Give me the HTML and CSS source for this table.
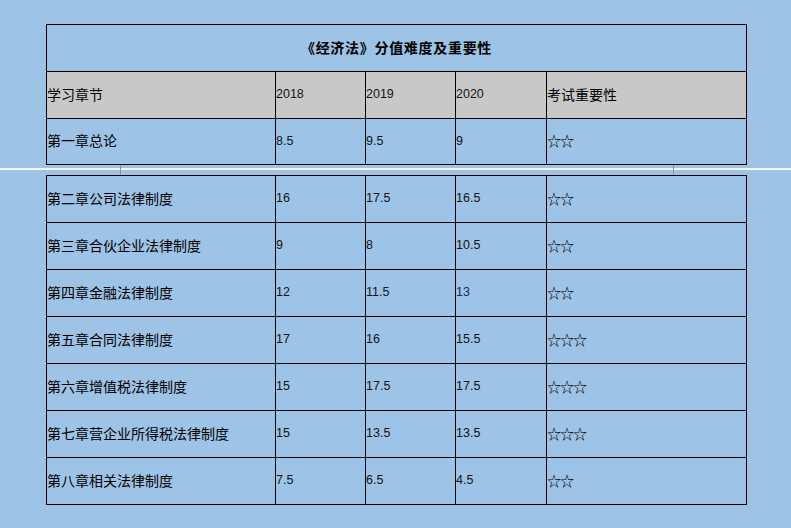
FILE: index.html
```html
<!DOCTYPE html>
<html lang="zh-CN">
<head>
<meta charset="utf-8">
<title>《经济法》分值难度及重要性</title>
<link rel="stylesheet" href="styles.css">
</head>
<body>
<div class="page">
  <div class="grid top">
    <div class="cell title">《经济法》分值难度及重要性</div>
    <div class="cell head zh">学习章节</div>
    <div class="cell head num">2018</div>
    <div class="cell head num">2019</div>
    <div class="cell head num">2020</div>
    <div class="cell head zh">考试重要性</div>
    <div class="cell zh">第一章总论</div>
    <div class="cell num">8.5</div>
    <div class="cell num">9.5</div>
    <div class="cell num">9</div>
    <div class="cell star">☆☆</div>
  </div>
  <div class="split">
    <span class="tick tick-left"></span>
    <span class="tick tick-right"></span>
  </div>
  <div class="grid bottom">
    <div class="cell zh">第二章公司法律制度</div>
    <div class="cell num">16</div>
    <div class="cell num">17.5</div>
    <div class="cell num">16.5</div>
    <div class="cell star">☆☆</div>

    <div class="cell zh">第三章合伙企业法律制度</div>
    <div class="cell num">9</div>
    <div class="cell num">8</div>
    <div class="cell num">10.5</div>
    <div class="cell star">☆☆</div>

    <div class="cell zh">第四章金融法律制度</div>
    <div class="cell num">12</div>
    <div class="cell num">11.5</div>
    <div class="cell num blue">13</div>
    <div class="cell star">☆☆</div>

    <div class="cell zh">第五章合同法律制度</div>
    <div class="cell num">17</div>
    <div class="cell num">16</div>
    <div class="cell num">15.5</div>
    <div class="cell star">☆☆☆</div>

    <div class="cell zh">第六章增值税法律制度</div>
    <div class="cell num">15</div>
    <div class="cell num">17.5</div>
    <div class="cell num">17.5</div>
    <div class="cell star">☆☆☆</div>

    <div class="cell zh">第七章营企业所得税法律制度</div>
    <div class="cell num">15</div>
    <div class="cell num">13.5</div>
    <div class="cell num">13.5</div>
    <div class="cell star">☆☆☆</div>

    <div class="cell zh">第八章相关法律制度</div>
    <div class="cell num">7.5</div>
    <div class="cell num">6.5</div>
    <div class="cell num">4.5</div>
    <div class="cell star">☆☆</div>
  </div>
</div>
</body>
</html>
```
FILE: styles.css
```css
html, body {
  margin: 0;
  padding: 0;
}
body {
  background: #9dc3e6;
  width: 791px;
  height: 528px;
  overflow: hidden;
  font-family: "Noto Sans CJK SC", "Noto Sans", sans-serif;
  color: #000;
}
.page {
  padding-top: 24px;
}
.grid {
  box-sizing: border-box;
  margin-left: 46px;
  width: 701px;
  display: grid;
  grid-template-columns: 229px 90px 90px 91px 200px;
  align-content: start;
  border-top: 1px solid #000;
  border-left: 1px solid #000;
}
.top {
  grid-template-rows: 47px 47px 46px;
  height: 141px;
}
.bottom {
  grid-template-rows: repeat(7, 47px);
  height: 330px;
}
.cell {
  border-right: 1px solid #000;
  border-bottom: 1px solid #000;
  display: flex;
  align-items: center;
  padding: 0;
  white-space: nowrap;
  overflow: hidden;
  line-height: 1;
}
.title {
  grid-column: 1 / -1;
  justify-content: center;
  font-weight: bold;
  font-size: 14px;
  letter-spacing: 0.7px;
  padding-bottom: 2px;
}
.head {
  background: #c8c8c8;
}
.zh {
  font-size: 14px;
  padding-bottom: 3px;
}
.num {
  font-family: "Liberation Sans", Arial, sans-serif;
  font-size: 12.5px;
  color: #141414;
  padding-bottom: 1px;
}
.num.blue {
  color: #13296b;
}
.star {
  font-size: 14px;
  letter-spacing: -1px;
  padding-bottom: 3px;
}
.split {
  position: relative;
  height: 10px;
  width: 791px;
}
.split::before {
  content: "";
  position: absolute;
  left: 0;
  right: 0;
  top: 3px;
  height: 2px;
  background: #f4f8fc;
}
.tick {
  position: absolute;
  top: 0;
  width: 1px;
  height: 10px;
  background: #7f98b0;
}
.tick-left {
  left: 120px;
}
.tick-right {
  left: 673px;
}
```
